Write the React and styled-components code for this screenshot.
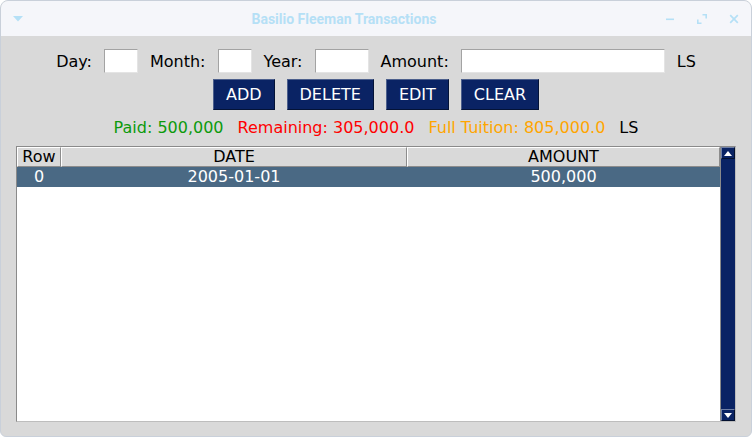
import React from "react";
import styled, { createGlobalStyle } from "styled-components";

const Global = createGlobalStyle`
  html, body { margin: 0; padding: 0; background: #ffffff; }
  * { box-sizing: border-box; }
`;

const NAVY = "#0a2364";
const ICON = "#b5e0f6";

const Window = styled.div`
  width: 752px;
  height: 437px;
  border: 1px solid #c9d0da;
  border-radius: 8px 8px 6px 6px;
  overflow: hidden;
  display: flex;
  flex-direction: column;
  background: #d9d9d9;
  font-family: "DejaVu Sans", sans-serif;
  font-size: 16px;
  color: #000;
`;

const TitleBar = styled.div`
  height: 35px;
  flex: none;
  display: flex;
  align-items: center;
  padding: 0 12px;
  background: #f5f6fa;
`;

const TitleText = styled.div`
  flex: 1;
  text-align: center;
  font-family: Roboto, "Liberation Sans", sans-serif;
  font-weight: 700;
  font-size: 14px;
  color: ${ICON};
`;

const IconBox = styled.div`
  width: 10px;
  height: 10px;
  display: flex;
  align-items: center;
  justify-content: center;
`;

const WinControls = styled.div`
  display: flex;
  gap: 22px;
  align-items: center;
`;

const Body = styled.div`
  flex: 1;
  display: flex;
  flex-direction: column;
  align-items: stretch;
  padding: 13px 15px 14px 15px;
  min-height: 0;
`;

const FormRow = styled.div`
  height: 24px;
  display: flex;
  align-items: center;
  justify-content: center;
  gap: 12px;
`;

const Label = styled.span`
  line-height: 19px;
  white-space: nowrap;
`;

const Field = styled.input`
  width: ${(p) => p.$w}px;
  height: 24px;
  border: 1px solid #a3a3a3;
  border-right-color: #e4e4e4;
  border-bottom-color: #e4e4e4;
  background: #fff;
  padding: 0 3px;
  font: inherit;
  outline: none;
`;

const ButtonRow = styled.div`
  margin-top: 6px;
  height: 31px;
  display: flex;
  justify-content: center;
  gap: 12px;
`;

const Button = styled.button`
  height: 31px;
  padding: 0 12px;
  background: ${NAVY};
  color: #ffffff;
  border: 1px solid #4c5f8c;
  border-right-color: #041337;
  border-bottom-color: #041337;
  font-family: "DejaVu Sans", sans-serif;
  font-size: 16px;
  line-height: 19px;
  cursor: pointer;
`;

const StatusRow = styled.div`
  margin-top: 8px;
  height: 19px;
  line-height: 19px;
  display: flex;
  justify-content: center;
  gap: 14px;
  white-space: nowrap;
`;

const Status = styled.span`
  color: ${(p) => p.$color};
`;

const TableFrame = styled.div`
  margin-top: 9px;
  flex: 1;
  min-height: 0;
  display: flex;
  border: 1px solid #8a8a8a;
  border-right-color: #bdbdbd;
  border-bottom-color: #bdbdbd;
`;

const Tree = styled.div`
  flex: 1;
  background: #ffffff;
  display: flex;
  flex-direction: column;
`;

const Grid = styled.div`
  display: grid;
  grid-template-columns: 44px 346px 1fr;
  height: 20px;
`;

const HeadCell = styled.div`
  background: #d9d9d9;
  border-top: 1px solid #ffffff;
  border-left: 1px solid #ffffff;
  border-right: 1px solid #8c8c8c;
  border-bottom: 1px solid #8c8c8c;
  text-align: center;
  line-height: 18px;
  white-space: nowrap;
  overflow: hidden;
`;

const DataRow = styled(Grid)`
  background: ${(p) => (p.$selected ? "#4a6984" : "#ffffff")};
  color: ${(p) => (p.$selected ? "#ffffff" : "#000000")};
`;

const DataCell = styled.div`
  text-align: center;
  line-height: 20px;
  white-space: nowrap;
`;

const Scrollbar = styled.div`
  width: 15px;
  flex: none;
  background: ${NAVY};
  border-left: 1px solid #8a8a8a;
  display: flex;
  flex-direction: column;
  justify-content: space-between;
`;

const Arrow = styled.div`
  height: 12px;
  border: 1px solid #6f7fa6;
  border-right-color: #03102e;
  border-bottom-color: #03102e;
  display: flex;
  align-items: center;
  justify-content: center;
`;

const Tri = ({ down }) => (
  <svg width="8" height="5" viewBox="0 0 8 5">
    <polygon points={down ? "0,0 8,0 4,5" : "0,5 8,5 4,0"} fill="#ffffff" />
  </svg>
);

export default function App() {
  return (
    <>
      <Global />
      <Window>
        <TitleBar>
          <IconBox>
            <svg width="10" height="6" viewBox="0 0 10 6">
              <polygon points="0,0 10,0 5,5.5" fill={ICON} />
            </svg>
          </IconBox>
          <TitleText>Basilio Fleeman Transactions</TitleText>
          <WinControls>
            <IconBox>
              <svg width="10" height="10" viewBox="0 0 10 10">
                <rect x="1" y="4.5" width="8" height="1.6" fill={ICON} />
              </svg>
            </IconBox>
            <IconBox>
              <svg width="10" height="10" viewBox="0 0 10 10">
                <path d="M5.5 0.8 H9.2 V4.5 M0.8 5.5 V9.2 H4.5" stroke={ICON} strokeWidth="1.6" fill="none" />
              </svg>
            </IconBox>
            <IconBox>
              <svg width="10" height="10" viewBox="0 0 10 10">
                <path d="M1.2 1.2 L8.8 8.8 M8.8 1.2 L1.2 8.8" stroke={ICON} strokeWidth="1.7" fill="none" />
              </svg>
            </IconBox>
          </WinControls>
        </TitleBar>
        <Body>
          <FormRow>
            <Label>Day:</Label>
            <Field $w={34} />
            <Label>Month:</Label>
            <Field $w={34} />
            <Label>Year:</Label>
            <Field $w={54} />
            <Label>Amount:</Label>
            <Field $w={204} />
            <Label>LS</Label>
          </FormRow>
          <ButtonRow>
            <Button>ADD</Button>
            <Button>DELETE</Button>
            <Button>EDIT</Button>
            <Button>CLEAR</Button>
          </ButtonRow>
          <StatusRow>
            <Status $color="#0c9a0c">Paid: 500,000</Status>
            <Status $color="#ff0000">Remaining: 305,000.0</Status>
            <Status $color="#ffa500">Full Tuition: 805,000.0</Status>
            <Status $color="#000000">LS</Status>
          </StatusRow>
          <TableFrame>
            <Tree>
              <Grid>
                <HeadCell>Row</HeadCell>
                <HeadCell>DATE</HeadCell>
                <HeadCell>AMOUNT</HeadCell>
              </Grid>
              <DataRow $selected>
                <DataCell>0</DataCell>
                <DataCell>2005-01-01</DataCell>
                <DataCell>500,000</DataCell>
              </DataRow>
            </Tree>
            <Scrollbar>
              <Arrow>
                <Tri />
              </Arrow>
              <Arrow>
                <Tri down />
              </Arrow>
            </Scrollbar>
          </TableFrame>
        </Body>
      </Window>
    </>
  );
}
